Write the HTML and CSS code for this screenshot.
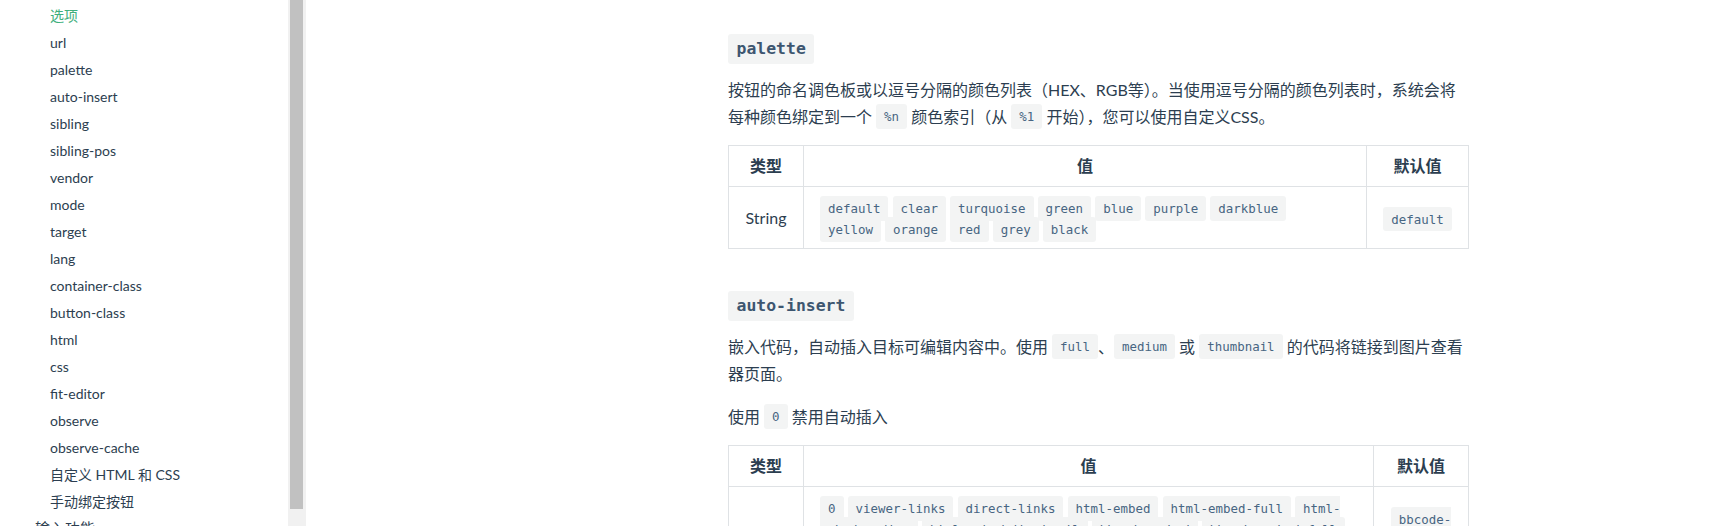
FILE: index.html
```html
<!DOCTYPE html>
<html lang="zh-CN">
<head>
<meta charset="utf-8">
<title>选项</title>
<link rel="stylesheet" href="styles.css">
</head>
<body>
<div class="page">
  <aside class="sidebar">
    <ul class="nav">
      <li class="active">选项</li>
      <li>url</li>
      <li>palette</li>
      <li>auto-insert</li>
      <li>sibling</li>
      <li>sibling-pos</li>
      <li>vendor</li>
      <li>mode</li>
      <li>target</li>
      <li>lang</li>
      <li>container-class</li>
      <li>button-class</li>
      <li>html</li>
      <li>css</li>
      <li>fit-editor</li>
      <li>observe</li>
      <li>observe-cache</li>
      <li>自定义 HTML 和 CSS</li>
      <li>手动绑定按钮</li>
      <li class="group">输入功能</li>
    </ul>
    <div class="track"><div class="thumb"></div></div>
  </aside>
  <main class="main">
    <div class="content">
      <h3 class="first"><code>palette</code></h3>
      <p class="lead">按钮的命名调色板或以逗号分隔的颜色列表（HEX、RGB等）。当使用逗号分隔的颜色列表时，系统会将每种颜色绑定到一个 <code>%n</code> 颜色索引（从 <code>%1</code> 开始），您可以使用自定义CSS。</p>
      <table class="t1">
        <colgroup><col class="c1"><col class="c2"><col class="c3"></colgroup>
        <thead><tr><th>类型</th><th>值</th><th>默认值</th></tr></thead>
        <tbody>
          <tr>
            <td class="type">String</td>
            <td class="vals"><code>default</code> <code>clear</code> <code>turquoise</code> <code>green</code> <code>blue</code> <code>purple</code> <code>darkblue</code><br><code>yellow</code> <code>orange</code> <code>red</code> <code>grey</code> <code>black</code></td>
            <td class="def"><code>default</code></td>
          </tr>
        </tbody>
      </table>

      <h3><code>auto-insert</code></h3>
      <p class="lead">嵌入代码，自动插入目标可编辑内容中。使用 <code>full</code>、<code>medium</code> 或 <code>thumbnail</code> 的代码将链接到图片查看器页面。</p>
      <p>使用 <code>0</code> 禁用自动插入</p>
      <table class="t2">
        <colgroup><col class="c1"><col class="c2"><col class="c3"></colgroup>
        <thead><tr><th>类型</th><th>值</th><th>默认值</th></tr></thead>
        <tbody>
          <tr>
            <td class="type">String</td>
            <td class="vals"><code>0</code> <code>viewer-links</code> <code>direct-links</code> <code>html-embed</code> <code>html-embed-full</code> <code>html-embed-medium</code> <code>html-embed-thumbnail</code> <code>bbcode-embed</code> <code>bbcode-embed-full</code> <code>bbcode-embed-medium</code> <code>bbcode-embed-thumbnail</code> <code>markdown-embed</code> <code>markdown-embed-full</code></td>
            <td class="def"><code>bbcode-embed-medium</code></td>
          </tr>
        </tbody>
      </table>
    </div>
  </main>
</div>
</body>
</html>
```
FILE: styles.css
```css
html, body {
  margin: 0;
  padding: 0;
  height: 526px;
  overflow: hidden;
  background: #fff;
}

body {
  font-family: Lato, "Noto Sans CJK SC", sans-serif;
  color: #2c3e50;
}

.page {
  display: flex;
  height: 526px;
}

/* sidebar */
.sidebar {
  display: flex;
  flex: none;
  width: 306px;
  height: 526px;
}

.nav {
  flex: 1;
  list-style: none;
  margin: 0;
  padding: 2px 0 0 0;
  font-size: 14px;
  overflow: hidden;
}

.nav li {
  line-height: 27px;
  padding-left: 50px;
  white-space: nowrap;
}

.nav li.active {
  color: #3eaf7c;
}

.nav li.group {
  padding-left: 35px;
  font-size: 15px;
}

.track {
  flex: none;
  width: 18px;
  box-sizing: border-box;
  padding: 0 3px 0 2px;
  background: #f1f1f1;
}

.thumb {
  height: 509px;
  background: #c1c1c1;
}

/* main */
.main {
  flex: 1;
  min-width: 0;
}

.content {
  width: 740px;
  margin-left: 422px;
}

h3 {
  margin: 42px 0 0;
  height: 30px;
  line-height: 30px;
  font-size: 16.45px;
}

h3.first {
  margin-top: 34px;
}

h3 code {
  display: inline-block;
  vertical-align: top;
  font-family: "DejaVu Sans Mono", monospace;
  font-weight: bold;
  font-size: 16.45px;
  line-height: 30px;
  padding: 0 8.5px;
  background: #f3f4f4;
  border-radius: 3px;
  color: #3d5670;
}

p {
  margin: 16px 0 0;
  font-size: 16px;
  line-height: 27.2px;
}

p.lead {
  margin-top: 12px;
}

p code,
td code {
  font-family: "DejaVu Sans Mono", monospace;
  font-size: 12.45px;
  line-height: 1;
  padding: 4.75px 8px;
  background: #f3f4f4;
  border-radius: 3px;
  color: #476582;
}

p code {
  vertical-align: 2px;
}

td code {
  vertical-align: 0;
}

table {
  margin-top: 15px;
  width: 740px;
  border-collapse: collapse;
  table-layout: fixed;
}

th, td {
  border: 1px solid #dfe2e5;
  padding: 9.6px 16px;
}

th {
  font-size: 16px;
  font-weight: bold;
  line-height: 20px;
  text-align: center;
}

td {
  font-size: 16px;
  line-height: 21px;
  text-align: center;
}

td.vals {
  text-align: left;
}

.t1 .c1 { width: 75px; }
.t1 .c2 { width: 563px; }
.t1 .c3 { width: 102px; }

.t2 .c1 { width: 75px; }
.t2 .c2 { width: 570px; }
.t2 .c3 { width: 95px; }
```
